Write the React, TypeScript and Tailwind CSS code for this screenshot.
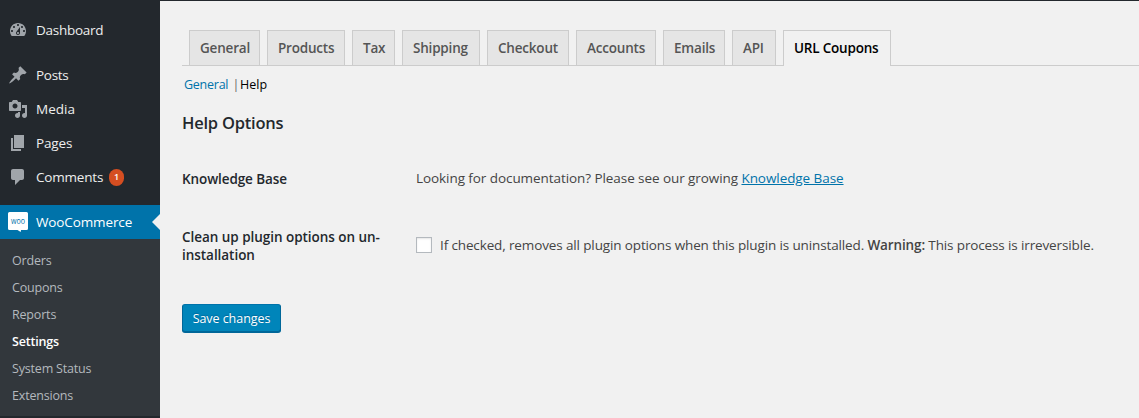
import React from "react";

const icons = {
  dashboard:
    "M3.76 16h12.48c1.1-1.37 1.76-3.11 1.76-5 0-4.42-3.58-8-8-8s-8 3.58-8 8c0 1.89.66 3.63 1.76 5zM10 4c.55 0 1 .45 1 1s-.45 1-1 1-1-.45-1-1 .45-1 1-1zM6 6c.55 0 1 .45 1 1s-.45 1-1 1-1-.45-1-1 .45-1 1-1zm8 0c.55 0 1 .45 1 1s-.45 1-1 1-1-.45-1-1 .45-1 1-1zm-5.37 5.55L12 7v6c0 1.1-.9 2-2 2s-2-.9-2-2c0-.57.24-1.08.63-1.45zM4 10c.55 0 1 .45 1 1s-.45 1-1 1-1-.45-1-1 .45-1 1-1zm12 0c.55 0 1 .45 1 1s-.45 1-1 1-1-.45-1-1 .45-1 1-1zm-5 3c0-.55-.45-1-1-1s-1 .45-1 1 .45 1 1 1 1-.45 1-1z",
  posts:
    "M10.44 3.02l1.82-1.82 6.36 6.35-1.83 1.82c-1.05-.68-2.48-.57-3.41.36l-.75.75c-.92.93-1.04 2.35-.35 3.41l-1.83 1.82-2.41-2.41-2.8 2.79c-.42.42-3.38 2.71-3.8 2.29s1.86-3.39 2.28-3.81l2.79-2.79L4.1 9.36l1.83-1.82c1.05.69 2.48.57 3.4-.36l.75-.75c.93-.92 1.05-2.35.36-3.41z",
  media:
    "M13 11V4c0-.55-.45-1-1-1h-1.67L9 1H5L3.67 3H2c-.55 0-1 .45-1 1v7c0 .55.45 1 1 1h10c.55 0 1-.45 1-1zM7 4.5c1.38 0 2.5 1.12 2.5 2.5S8.38 9.5 7 9.5 4.5 8.38 4.5 7 5.62 4.5 7 4.5zM14 6h5v10.5c0 1.38-1.12 2.5-2.5 2.5S14 17.88 14 16.5s1.12-2.5 2.5-2.5c.17 0 .34.02.5.05V9h-3V6zm-4 8.05V13h2v3.5c0 1.38-1.12 2.5-2.5 2.5S7 17.88 7 16.5 8.12 14 9.5 14c.17 0 .34.02.5.05z",
  pages: "M6 15V2h10v13H6zm-1 1h8v2H3V5h2v11z",
  comments:
    "M5 2h9c1.1 0 2 .9 2 2v7c0 1.1-.9 2-2 2h-2l-5 5v-5H5c-1.1 0-2-.9-2-2V4c0-1.1.9-2 2-2z",
};

function MenuItem({ icon, label, tracking, badge }: { icon: keyof typeof icons; label: string; tracking: string; badge?: string }) {
  return (
    <a className="flex h-[34px] items-center pl-2">
      <svg viewBox="0 0 20 20" className="size-5 shrink-0 fill-[#a0a5aa]" fillRule="evenodd">
        <path d={icons[icon]} />
      </svg>
      <span className={`ml-2 text-[13.5px] text-[#eee] ${tracking}`}>{label}</span>
      {badge && (
        <span className="ml-1.5 flex h-[17px] w-[15px] items-center justify-center rounded-full bg-[#d54e21] text-[9px] font-semibold text-white">
          {badge}
        </span>
      )}
    </a>
  );
}

const submenu = [
  { label: "Orders", style: "text-[#b4b9be]" },
  { label: "Coupons", style: "text-[#b4b9be]" },
  { label: "Reports", style: "text-[#b4b9be]" },
  { label: "Settings", style: "font-semibold text-white" },
  { label: "System Status", style: "text-[#b4b9be]" },
  { label: "Extensions", style: "text-[#b4b9be]" },
];

const tabs = [
  { label: "General", style: "w-[71px]" },
  { label: "Products", style: "w-[78px]" },
  { label: "Tax", style: "w-[43px]" },
  { label: "Shipping", style: "w-[78px]" },
  { label: "Checkout", style: "w-[82px]" },
  { label: "Accounts", style: "w-20" },
  { label: "Emails", style: "w-[62px]" },
  { label: "API", style: "w-11" },
  { label: "URL Coupons", style: "w-[108px]", active: true },
];

export default function App() {
  return (
    <div className="flex h-[418px] w-[1139px] overflow-hidden whitespace-nowrap bg-[#f1f1f1] font-['Open_Sans','Noto_Sans',sans-serif]">
      <nav className="w-40 shrink-0 bg-[#23282d] pt-[13px]">
        <MenuItem icon="dashboard" label="Dashboard" tracking="tracking-[-0.27px]" />
        <div className="h-[11px]" />
        <MenuItem icon="posts" label="Posts" tracking="tracking-[-0.3px]" />
        <MenuItem icon="media" label="Media" tracking="tracking-normal" />
        <MenuItem icon="pages" label="Pages" tracking="tracking-[-0.15px]" />
        <MenuItem icon="comments" label="Comments" tracking="tracking-[-0.2px]" badge="1" />
        <div className="h-[11px]" />
        <a className="flex h-[34px] items-center bg-[#0073aa] pl-2">
          <svg viewBox="0 0 20 20" className="size-5 shrink-0 overflow-visible">
            <path d="M1.500 0h17A1.500 1.500 0 0 1 20 1.500v15a1.500 1.500 0 0 1-1.500 1.500H13l-.3 2-3.200-2h-8A1.500 1.500 0 0 1 0 16.500v-15A1.500 1.500 0 0 1 1.500 0z" fill="#fff" />
            <text x="10" y="12" textAnchor="middle" fontSize="9" fontWeight="500" fill="#0073aa" textLength="14" lengthAdjust="spacingAndGlyphs">woo</text>
          </svg>
          <span className="ml-2 text-[13.5px] tracking-[-0.12px] text-white">WooCommerce</span>
          <svg viewBox="0 0 8 16" className="ml-auto h-4 w-2 fill-[#f1f1f1]">
            <path d="M8 0v16L0 8z" />
          </svg>
        </a>
        <div className="flex h-[177px] flex-col bg-[#32373c] pl-3 pt-2">
          {submenu.map((item) => (
            <a key={item.label} className={`h-[27px] text-[12.5px] leading-[27px] tracking-[-0.18px] ${item.style}`}>{item.label}</a>
          ))}
        </div>
      </nav>

      <main className="flex min-w-0 flex-1 flex-col border-t border-[#23282d] text-[#444]">
        <div className="ml-[22px] mt-[29px] flex h-9 shrink-0 gap-[7px] border-b border-[#ccc] pl-[7px]">
          {tabs.map((tab) => (
            <a
              key={tab.label}
              className={`flex border border-b-0 border-[#ccc] pl-2.5 pt-[5px] text-[13.5px] font-semibold leading-6 tracking-[-0.2px] ${tab.style} ${
                tab.active ? "h-9 bg-[#f1f1f1] text-black" : "h-[35px] bg-[#e5e5e5] text-[#555]"
              }`}
            >
              {tab.label}
            </a>
          ))}
        </div>
        <div className="ml-6 mt-[9px] flex h-5 items-center text-[12.5px]">
          <a className="w-[48.5px] tracking-[-0.25px] text-[#0073aa]">General</a>
          <span className="w-[7.5px] text-[#666]">|</span>
          <a className="text-black">Help</a>
        </div>
        <h2 className="ml-[22px] mt-4 h-6 text-[16.5px] font-semibold leading-6 tracking-[-0.22px] text-[#23282d]">Help Options</h2>

        <div className="ml-[22px] mt-8 flex h-6 text-[13.5px] leading-6">
          <div className="w-[234px] font-semibold tracking-[-0.1px] text-[#23282d]">Knowledge Base</div>
          <p className="-mt-px tracking-[-0.07px]">
            Looking for documentation? Please see our growing <a className="text-[#0073aa] underline">Knowledge Base</a>
          </p>
        </div>
        <div className="ml-[22px] mt-[37px] flex h-9 text-[13.5px]">
          <div className="w-[234px] font-semibold leading-[18px] tracking-[-0.04px] text-[#23282d]">
            Clean up plugin options on un-
            <br />
            installation
          </div>
          <label className="flex h-[34px] items-center tracking-[-0.13px]">
            <span className="mr-2 size-4 border border-[#b4b9be] bg-white shadow-[inset_0_1px_2px_rgba(0,0,0,0.1)]" />
            <span>If checked, removes all plugin options when this plugin is uninstalled. <b className="font-semibold">Warning:</b> This process is irreversible.</span>
          </label>
        </div>
        <button className="ml-[22px] mt-10 h-7 w-[99px] rounded-[3px] border border-[#006799] border-t-[#0073aa] bg-[#0085ba] pt-0.5 text-[12.5px] tracking-[-0.05px] text-white shadow-[0_1px_0_#006799] [text-shadow:0_-1px_1px_#006799]">
          Save changes
        </button>
      </main>
    </div>
  );
}
